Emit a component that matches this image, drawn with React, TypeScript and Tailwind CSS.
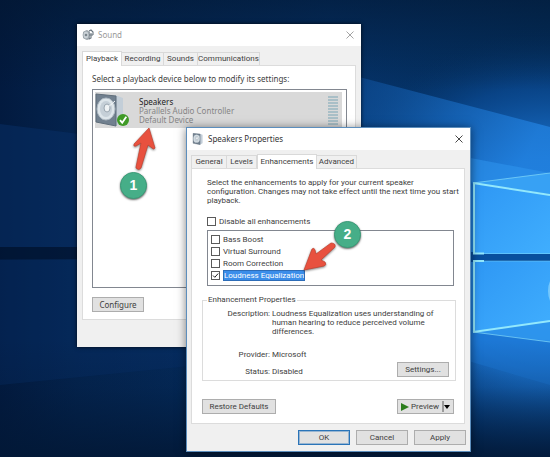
import { useState } from "react";
import type { ReactNode } from "react";
import clsx from "clsx";

function Wallpaper() {
  return (
    <svg
      viewBox="0 0 550 457"
      preserveAspectRatio="none"
      className="absolute inset-0 w-full h-full"
      aria-hidden="true"
    >
      <defs>
        <linearGradient id="base" x1="0" y1="0" x2="1" y2="0">
          <stop offset="0" stopColor="#021a3f" />
          <stop offset="0.14" stopColor="#04244f" />
          <stop offset="0.6" stopColor="#05336a" />
          <stop offset="1" stopColor="#04305f" />
        </linearGradient>
        <radialGradient id="glow" gradientUnits="userSpaceOnUse" cx="550" cy="265" r="240">
          <stop offset="0" stopColor="#2d9bf5" />
          <stop offset="0.45" stopColor="#1d79d8" stopOpacity="0.95" />
          <stop offset="0.75" stopColor="#0c509f" stopOpacity="0.6" />
          <stop offset="1" stopColor="#053063" stopOpacity="0" />
        </radialGradient>
        <linearGradient id="beam" x1="0" y1="0" x2="1" y2="0.3">
          <stop offset="0" stopColor="#0d4c96" stopOpacity="0.5" />
          <stop offset="1" stopColor="#2180de" stopOpacity="0.8" />
        </linearGradient>
        <linearGradient id="pane" x1="0" y1="0" x2="1" y2="1">
          <stop offset="0" stopColor="#2e97f4" />
          <stop offset="1" stopColor="#40aefe" />
        </linearGradient>
        <linearGradient id="ceiling" x1="0" y1="0" x2="0" y2="1">
          <stop offset="0" stopColor="#021630" stopOpacity="0.6" />
          <stop offset="1" stopColor="#021630" stopOpacity="0" />
        </linearGradient>
        <linearGradient id="floor" x1="0" y1="0" x2="0" y2="1">
          <stop offset="0" stopColor="#021836" stopOpacity="0" />
          <stop offset="0.4" stopColor="#021836" stopOpacity="0.2" />
          <stop offset="1" stopColor="#021836" stopOpacity="0.9" />
        </linearGradient>
      </defs>
      <rect width="550" height="457" fill="url(#base)" />
      <rect width="550" height="457" fill="url(#glow)" />
      <rect width="550" height="90" fill="url(#ceiling)" />
      <path d="M0 124 L80 134 V247 H0 Z" fill="#073068" opacity="0.5" />
      <path d="M0 260 H80 V347 H190 V366 L0 385 Z" fill="#07306a" opacity="0.4" />
      <path d="M0 247 H80 V259 H0 Z" fill="#011431" opacity="0.7" />
      <path d="M340 72 L550 127 V195 L472 183 L340 150 Z" fill="url(#beam)" />
      <path d="M460 156 L550 173 V194 L472 183 Z" fill="#2f97f2" opacity="0.5" />
      <path d="M465 332 L550 340 V385 L465 360 Z" fill="#1c78d6" opacity="0.7" />
      <rect y="340" width="550" height="117" fill="url(#floor)" />
      <rect x="465" y="252" width="85" height="10" fill="#084f9e" />
      <path d="M473 183 L550 195 V254 H473 Z" fill="url(#pane)" />
      <path d="M473 261 H550 V321 L473 332 Z" fill="url(#pane)" />
      <path d="M473 183 L550 173 V194 Z" fill="#3ba6f7" opacity="0.8" />
      <path d="M473 332 L550 321 V342 Z" fill="#3199f0" opacity="0.8" />
      <g fill="none" stroke="#93e8fc">
        <path d="M550 195 L473 183" strokeWidth="2" />
        <path d="M474 184 V253.5 H484" strokeWidth="2" />
        <path d="M484 261 H474 V331" strokeWidth="2" />
        <path d="M473 332 L550 321" strokeWidth="2" />
        <path d="M484 253.5 H550 M484 261 H550" strokeWidth="1" opacity="0.4" />
        <path d="M473 183 L550 173 M473 332 L550 342" strokeWidth="1" opacity="0.6" />
      </g>
      <ellipse cx="554" cy="291" rx="6" ry="13" fill="#aee9ff" opacity="0.5" />
    </svg>
  );
}

function SpeakerIcon({ className }: { className?: string }) {
  return (
    <svg viewBox="0 0 30 34" className={className} aria-hidden="true">
      <path d="M20 2 L28 5 V29 L20 33 Z" fill="#c3ced8" />
      <path d="M1 1 L21 3 V33 L1 29 Z" fill="#71808f" />
      <path d="M1 1 L21 3 V33 L1 29 Z" fill="none" stroke="#5f6d7a" />
      <ellipse cx="11" cy="16" rx="9" ry="11" fill="#dde5ea" stroke="#aeb9c2" />
      <ellipse cx="11" cy="16" rx="6" ry="8" fill="#c5cfd7" />
      <ellipse cx="12" cy="15" rx="3" ry="4" fill="#eef2f4" stroke="#9aa6b0" />
      <path d="M12 15 L20 8" stroke="#f4f7f9" />
    </svg>
  );
}

function SoundIcon() {
  return (
    <svg viewBox="0 0 12 12" className="w-3 h-3" aria-hidden="true">
      <path d="M1 3 L5 1 L8 3 V10 L5 11 L1 9 Z" fill="#9aa2a9" />
      <ellipse cx="4" cy="6" rx="3" ry="4" fill="#cbd2d7" stroke="#929ca4" strokeWidth="0.7" />
      <circle cx="4" cy="6" r="1.3" fill="#7b858d" />
      <path d="M7 2 L9 1 L11 3 V6 M7 6 H11 M9 4 V9 L7 10" fill="none" stroke="#68747d" strokeWidth="1.1" />
    </svg>
  );
}

function CloseIcon() {
  return (
    <svg viewBox="0 0 8 8" className="w-2 h-2" aria-hidden="true">
      <path d="M0.5 0.5 L7.5 7.5 M7.5 0.5 L0.5 7.5" stroke="currentColor" strokeWidth="0.9" />
    </svg>
  );
}

type WindowProps = {
  title: string;
  icon: ReactNode;
  className?: string;
  titleClassName?: string;
  children: ReactNode;
};

function Window({ title, icon, className, titleClassName, children }: WindowProps) {
  return (
    <section aria-label={title} className={clsx("absolute flex flex-col bg-[#f0f0f0]", className)}>
      <header
        className={clsx(
          "flex items-center gap-1 h-[22px] pl-[5px] pr-[7px] bg-white font-['Noto_Sans',sans-serif]",
          titleClassName
        )}
      >
        {icon}
        <h1 className="flex-1">{title}</h1>
        <button type="button" aria-label={`Close ${title}`}>
          <CloseIcon />
        </button>
      </header>
      {children}
    </section>
  );
}

type Tab = { name: string; className: string };

function Tabs({ tabs, active }: { tabs: Tab[]; active: string }) {
  return (
    <div role="tablist" className="flex items-end font-[Roboto,sans-serif]">
      {tabs.map((tab) => (
        <button
          key={tab.name}
          type="button"
          role="tab"
          aria-selected={tab.name === active}
          className={clsx(
            "whitespace-nowrap border-[#d9d9d9]",
            tab.className,
            tab.name === active
              ? "relative -mb-px h-[15px] border-x border-t bg-white"
              : "h-[13px] border-r border-t bg-[#f0f0f0]"
          )}
        >
          {tab.name}
        </button>
      ))}
    </div>
  );
}

function Button({ className, children }: { className?: string; children: ReactNode }) {
  return (
    <button
      type="button"
      className={clsx("h-[15px] flex items-center justify-center border bg-[#e1e1e1] whitespace-nowrap", className)}
    >
      {children}
    </button>
  );
}

type CheckProps = {
  label: string;
  checked: boolean;
  selected?: boolean;
  onChange: () => void;
};

function Check({ label, checked, selected, onChange }: CheckProps) {
  return (
    <label className="flex items-center h-3 gap-[3px]">
      <span className="grid">
        <input
          type="checkbox"
          checked={checked}
          onChange={onChange}
          className="appearance-none [grid-area:1/1] w-[9px] h-[9px] border border-[#5a5a5a] bg-white"
        />
        {checked && (
          <svg viewBox="0 0 9 9" className="[grid-area:1/1] w-[9px] h-[9px] pointer-events-none" aria-hidden="true">
            <path d="M2 4.5 L3.8 6.3 L7.2 2.5" fill="none" stroke="#222" />
          </svg>
        )}
      </span>
      <span
        className={clsx(
          "leading-[11px]",
          selected && "px-px bg-[#3b8eea] text-white outline outline-[#2c6cb8] -outline-offset-1"
        )}
      >
        {label}
      </span>
    </label>
  );
}

const playbackTabs = [
  { name: "Playback", className: "w-10" },
  { name: "Recording", className: "w-[42px]" },
  { name: "Sounds", className: "w-[34px]" },
  { name: "Communications", className: "w-[62px]" },
];

function SoundWindow() {
  return (
    <Window
      title="Sound"
      icon={<SoundIcon />}
      titleClassName="text-[#999]"
      className="left-[77px] top-6 w-[284px] h-[323px] font-['Noto_Sans',sans-serif] shadow-[0_0_4px_rgba(0,0,0,0.8)]"
    >
      <div className="flex-1 flex flex-col px-[5px] pt-[5px] pb-[27px]">
        <Tabs tabs={playbackTabs} active="Playback" />
        <div role="tabpanel" className="flex-1 flex flex-col items-start border border-[#dcdcdc] bg-white pl-[9px] pr-2 py-[7px]">
          <p className="leading-3">Select a playback device below to modify its settings:</p>
          <div className="flex-1 w-full mt-1 mb-[9px] border border-[#828790] p-[2px] pr-1">
            <div className="flex items-center h-9 bg-[#d9d9d9]">
              <div className="relative">
                <SpeakerIcon className="w-[30px] h-[34px]" />
                <svg viewBox="0 0 12 12" className="absolute left-[22px] top-[21px] w-3 h-3" aria-hidden="true">
                  <circle cx="6" cy="6" r="6" fill="#3f9a26" />
                  <path d="M3 6.2 L5.2 8.7 L9.3 2.8" fill="none" stroke="#fff" strokeWidth="1.8" />
                </svg>
              </div>
              <div className="flex-1 pl-[14px] leading-[9px] text-[#858585]">
                <p className="text-[#222]">Speakers</p>
                <p>Parallels Audio Controller</p>
                <p>Default Device</p>
              </div>
              <div className="flex flex-col gap-px pr-1">
                {Array.from({ length: 10 }, (_, i) => (
                  <span key={i} className="w-[10px] h-[2px] bg-[#a9bfc7]" />
                ))}
              </div>
            </div>
          </div>
          <Button className="w-[52px] border-[#adadad]">Configure</Button>
        </div>
      </div>
    </Window>
  );
}

const propertyTabs = [
  { name: "General", className: "w-9 border-l" },
  { name: "Levels", className: "w-[30px]" },
  { name: "Enhancements", className: "w-[60px]" },
  { name: "Advanced", className: "w-10" },
];

const enhancements = ["Bass Boost", "Virtual Surround", "Room Correction", "Loudness Equalization"];

function PropertiesWindow() {
  const [disabled, setDisabled] = useState(false);
  const [enabled, setEnabled] = useState(["Loudness Equalization"]);

  const toggle = (name: string) =>
    setEnabled((list) => (list.includes(name) ? list.filter((n) => n !== name) : [...list, name]));

  return (
    <Window
      title="Speakers Properties"
      icon={<SpeakerIcon className="w-3 h-3" />}
      titleClassName="text-[#333]"
      className="left-[186px] top-[127px] w-[285px] h-[325px] border border-[#5c8ebd] font-[Roboto,sans-serif] shadow-[0_1px_9px_rgba(0,0,0,0.5)]"
    >
      <div className="flex-1 flex flex-col px-1 pt-1 pb-[6px]">
        <Tabs tabs={propertyTabs} active="Enhancements" />
        <div role="tabpanel" className="flex-1 flex flex-col mr-px border border-[#dcdcdc] bg-white pl-[10px] pr-2 py-[9px]">
          <div className="pl-[5px] pr-[2px]">
            <p className="leading-[9px] whitespace-nowrap">
              Select the enhancements to apply for your current speaker
              <br />
              configuration. Changes may not take effect until the next time you start
              <br />
              playback.
            </p>
            <div className="mt-[10px]">
              <Check label="Disable all enhancements" checked={disabled} onChange={() => setDisabled(!disabled)} />
            </div>
            <div className="mt-[3px] h-[56px] border border-[#828790] pl-[3px] pt-[2px]">
              {enhancements.map((name) => (
                <Check
                  key={name}
                  label={name}
                  checked={enabled.includes(name)}
                  selected={name === "Loudness Equalization"}
                  onChange={() => toggle(name)}
                />
              ))}
            </div>
          </div>
          <fieldset className="mt-2 h-[87px] border border-[#dcdcdc] pt-[3px] pr-[6px]">
            <legend className="ml-1 px-px leading-3">Enhancement Properties</legend>
            <dl className="grid grid-cols-[67px_1fr] gap-x-[2px] leading-[9px]">
              <dt className="text-right">Description:</dt>
              <dd className="h-[41px] whitespace-nowrap">
                Loudness Equalization uses understanding of
                <br />
                human hearing to reduce perceived volume
                <br />
                differences.
              </dd>
              <dt className="text-right">Provider:</dt>
              <dd>Microsoft</dd>
              <dt className="pt-2 text-right">Status:</dt>
              <dd className="flex items-start justify-between">
                <span className="pt-2">Disabled</span>
                <Button className="mt-[3px] w-[52px] border-[#adadad]">Settings...</Button>
              </dd>
            </dl>
          </fieldset>
          <div className="flex justify-between mt-auto pr-[2px]">
            <Button className="w-[74px] border-[#adadad]">Restore Defaults</Button>
            <Button className="w-[57px] border-[#adadad] gap-[2px]">
              <svg viewBox="0 0 8 8" className="w-2 h-2" aria-hidden="true">
                <path d="M0 0 L8 4 L0 8 Z" fill="#2b7d1c" />
              </svg>
              Preview
              <svg viewBox="0 0 9 11" className="w-[9px] h-[11px]" aria-hidden="true">
                <path d="M2 0 V11" stroke="#555" />
                <path d="M3 4 H9 L6 8 Z" fill="#000" />
              </svg>
            </Button>
          </div>
        </div>
        <div className="flex justify-end gap-[6px] mt-[6px]">
          <Button className="w-[52px] border-[#2a74b8] outline outline-[#2a74b8]/40 -outline-offset-2">OK</Button>
          <Button className="w-[52px] border-[#adadad]">Cancel</Button>
          <Button className="w-[52px] border-[#adadad]">Apply</Button>
        </div>
      </div>
    </Window>
  );
}

function Step({ number, className }: { number: number; className: string }) {
  return (
    <div
      className={clsx(
        "absolute w-[27px] h-[27px] rounded-full flex items-center justify-center bg-[#46ae88] border border-[#3a9c78] text-white text-[14px] font-bold font-['Liberation_Sans',sans-serif] shadow-[0_1px_2px_rgba(0,0,0,0.6)]",
        className
      )}
    >
      {number}
    </div>
  );
}

export default function App() {
  return (
    <main className="relative min-h-screen overflow-hidden bg-[#04244f] text-[8px] text-[#404040]">
      <Wallpaper />
      <SoundWindow />
      <PropertiesWindow />
      <svg
        viewBox="0 0 24 46"
        className="absolute left-[132px] top-[127px] w-6 h-[46px] drop-shadow-[0_1px_1px_rgba(0,0,0,0.5)]"
        aria-hidden="true"
      >
        <path
          d="M17 1 L23 21 Q22 23 20 21 L16 18 L9 41 Q7 44 4 41 L4 40 L9 16 L4 19 Q1 20 2 17 Z"
          fill="#e8513f"
          stroke="#c2402f"
          strokeWidth="0.7"
        />
      </svg>
      <svg
        viewBox="0 0 34 30"
        className="absolute left-[303px] top-[241px] w-[34px] h-[30px] drop-shadow-[0_1px_1px_rgba(0,0,0,0.5)]"
        aria-hidden="true"
      >
        <path
          d="M1 29 L9 8 Q11 6 12 9 L13 13 L28 2 Q33 2 32 6 L18 19 L22 21 Q24 24 21 25 Z"
          fill="#e8513f"
          stroke="#c2402f"
          strokeWidth="0.7"
        />
      </svg>
      <Step number={1} className="left-[120px] top-[172px]" />
      <Step number={2} className="left-[334px] top-[221px]" />
    </main>
  );
}
